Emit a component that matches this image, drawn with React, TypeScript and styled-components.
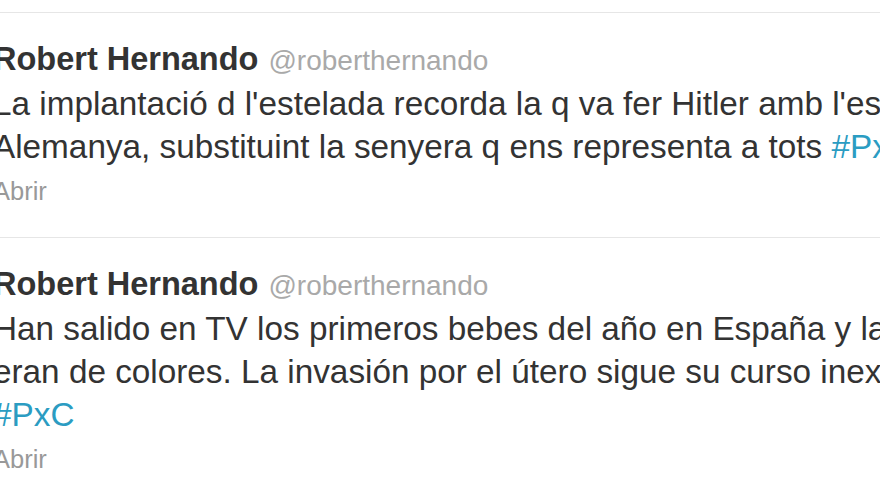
import styled, { createGlobalStyle } from "styled-components";

const GlobalStyle = createGlobalStyle`
  html, body {
    margin: 0;
    padding: 0;
    background: #ffffff;
    overflow: hidden;
  }
  body {
    font-family: "Liberation Sans", Arial, Helvetica, sans-serif;
  }
`;

const Stream = styled.div`
  width: 880px;
  height: 495px;
  overflow: hidden;
  padding-top: 12px;
  box-sizing: border-box;
  background: #ffffff;
`;

const TweetItem = styled.div`
  border-top: 1px solid #e6e6e6;
  padding: 25px 0 23px;
`;

const Content = styled.div`
  margin-left: -7px;
  white-space: nowrap;
`;

const Header = styled.div`
  display: flex;
  align-items: baseline;
  gap: 10px;
  line-height: 42px;
`;

const FullName = styled.span`
  font-size: 32.5px;
  font-weight: bold;
  color: #333333;
`;

const Handle = styled.span`
  font-size: 28px;
  color: #a9a9a9;
`;

const Text = styled.div`
  font-size: 33.3px;
  line-height: 43px;
  color: #333333;
`;

const Line = styled.div`
  white-space: nowrap;
`;

const Hashtag = styled.span`
  color: #2b9cc2;
`;

const Expand = styled.div`
  font-size: 25.5px;
  line-height: 46px;
  color: #999999;
`;

interface TweetProps {
  lines: React.ReactNode[];
}

function Tweet({ lines }: TweetProps) {
  return (
    <TweetItem>
      <Content>
        <Header>
          <FullName>Robert Hernando</FullName>
          <Handle>@roberthernando</Handle>
        </Header>
        <Text>
          {lines.map((l, i) => (
            <Line key={i}>{l}</Line>
          ))}
        </Text>
        <Expand>Abrir</Expand>
      </Content>
    </TweetItem>
  );
}

export default function App() {
  return (
    <>
      <GlobalStyle />
      <Stream>
        <Tweet
          lines={[
            "La implantació d l'estelada recorda la q va fer Hitler amb l'esvàstica a",
            <>
              Alemanya, substituint la senyera q ens representa a tots{" "}
              <Hashtag>#PxC</Hashtag>
            </>,
          ]}
        />
        <Tweet
          lines={[
            "Han salido en TV los primeros bebes del año en España y la mayoría",
            "eran de colores. La invasión por el útero sigue su curso inexorable",
            <Hashtag>#PxC</Hashtag>,
          ]}
        />
      </Stream>
    </>
  );
}
